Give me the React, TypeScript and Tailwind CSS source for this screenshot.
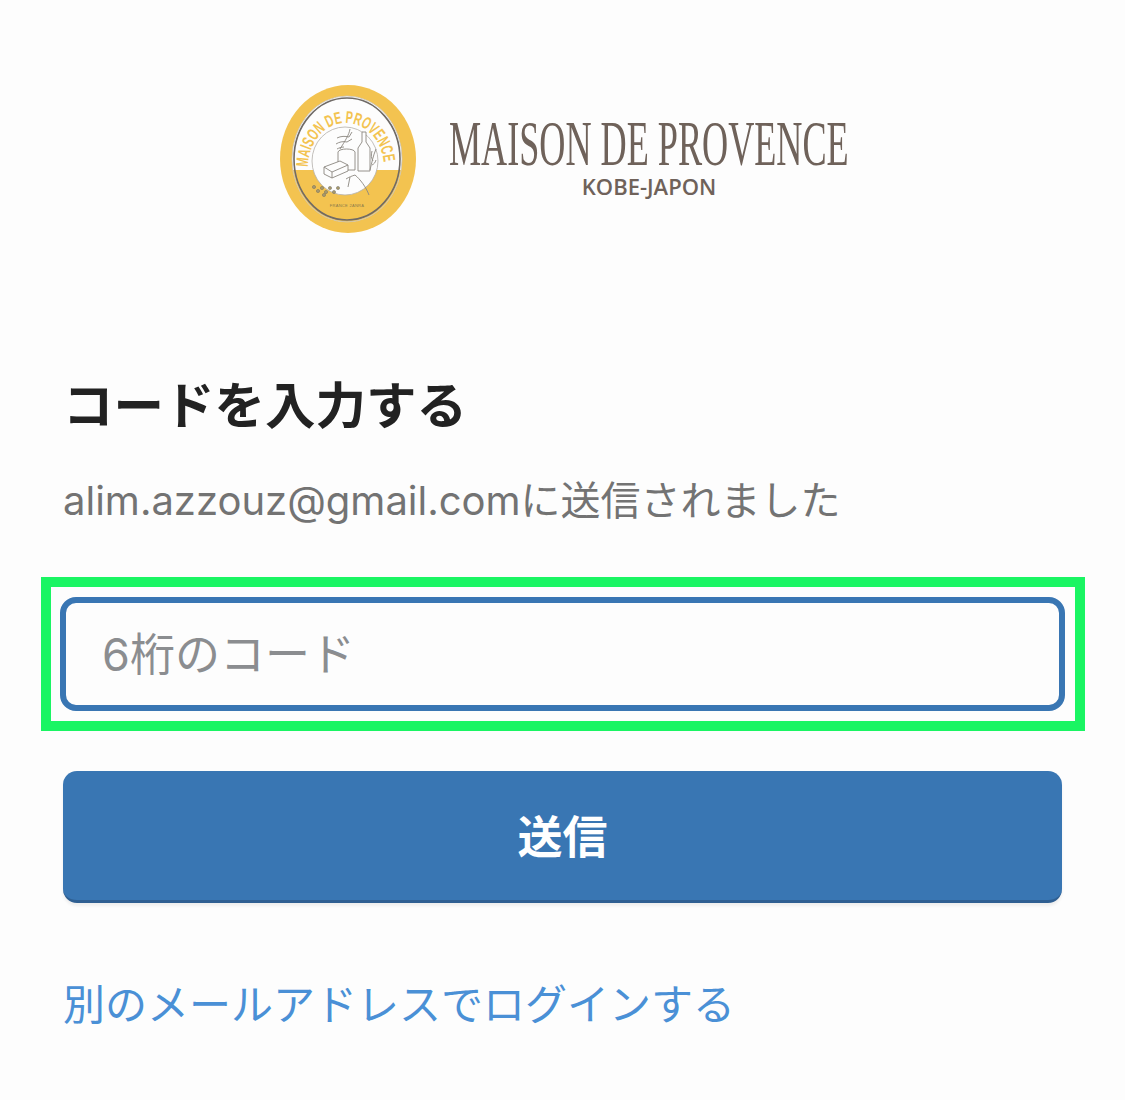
const JP = "font-['Inter','Noto_Sans_CJK_JP',sans-serif]";

const LogoMark = () => (
   <svg width="136" height="148" viewBox="0 0 136 148" className="shrink-0" aria-hidden="true">
      <defs>
         <clipPath id="lower">
            <rect x="0" y="85" width="136" height="63" />
         </clipPath>
         <path id="ring" d="M 28 82 A 38 44 0 0 1 104 82" />
      </defs>
      <ellipse cx="68" cy="74" rx="68" ry="74" fill="#f3c350" />
      <ellipse cx="67" cy="74" rx="55" ry="63" fill="#fdfdfd" />
      <ellipse cx="67" cy="74" rx="55" ry="63" fill="#f3c350" clipPath="url(#lower)" />
      <ellipse cx="67" cy="74" rx="53" ry="61" fill="none" stroke="#6f6a66" strokeWidth="1.6" />
      <ellipse cx="67" cy="74" rx="55" ry="63" fill="none" stroke="#c9c4ba" strokeWidth="0.8" />
      <ellipse cx="65" cy="76" rx="33" ry="34" fill="#fdfdfd" stroke="#b3afa9" strokeWidth="0.8" />
      <text fontFamily="'Liberation Sans', sans-serif" fontSize="17" fontWeight="700" fill="#f3c350">
         <textPath href="#ring" textLength="124" lengthAdjust="spacingAndGlyphs">MAISON DE PROVENCE</textPath>
      </text>
      {/* bottle, crock, loaf, sprigs */}
      <g fill="#fdfdfd" stroke="#8b8780" strokeWidth="0.9">
         <path d="M70 44c-1 6-5 12-10 20M69 52c-4-1-8-1-12 1M67 57c-4-1-8 0-11 2M64 62c-3 0-5 1-7 2M69 52l3-5M67 57l5-3" fill="none" />
         <path d="M58 67c1-4 16-4 17 0v18H58z" />
         <path d="M44 82l16-6 8 4v6l-16 7-8-4z" />
         <path d="M44 82l8 5 16-7M52 87v6" fill="none" />
         <path d="M82 47v10l-4 6v23h12V63l-4-6V47z" />
         <path d="M90 85c2-8 3-14 6-21M93 76c-2-3-2-6-1-10M92 80c2-1 3-2 4-5" fill="none" />
         <path d="M66 94c3-2 6-3 9-4 5 4 11 12 14 20M70 92l-2 10" fill="none" />
      </g>
      <g fill="#a89a6c" stroke="#6e6a60" strokeWidth="0.5">
         <circle cx="34" cy="102" r="1.6" />
         <circle cx="38" cy="106" r="1.6" />
         <circle cx="42" cy="103" r="1.6" />
         <circle cx="46" cy="107" r="1.6" />
         <circle cx="50" cy="103" r="1.6" />
         <circle cx="54" cy="107" r="1.6" />
         <circle cx="58" cy="103" r="1.6" />
         <circle cx="44" cy="110" r="1.6" />
      </g>
      <text x="67" y="122" textAnchor="middle" fontFamily="'Liberation Sans', sans-serif" fontSize="4" fill="#8a7a4c" letterSpacing="0.3">
         FRANCE 2ANRA
      </text>
   </svg>
);

export default function App() {
   return (
      <div className={`flex min-h-[1100px] flex-col bg-[#fdfdfd] ${JP}`}>
         {/* Logo */}
         <div className="flex items-center pl-[280px] pt-[85px]">
            <LogoMark />
            <div className="ml-[34px] mt-[-6px] flex w-[398px] flex-col items-center">
               <span className="origin-center scale-x-[0.565] whitespace-nowrap font-['Liberation_Serif',serif] text-[64px] leading-[60px] text-[#6f625a]">
                  MAISON DE PROVENCE
               </span>
               <span className="whitespace-nowrap font-['Open_Sans',sans-serif] text-[22px] font-semibold leading-[24px] text-[#6f625a]">
                  KOBE-JAPON
               </span>
            </div>
         </div>

         <div className="flex flex-col px-[63px] pt-[141px]">
            <h1 className="text-[50.5px] font-bold leading-[64px] text-[#222222]">コードを入力する</h1>
            <p className="mt-[39px] text-[40px] leading-[48px] text-[#737373]">alim.azzouz@gmail.comに送信されました</p>
         </div>

         {/* Focused field with highlight box */}
         <div className="mx-[41px] mt-[52px] w-[1044px] border-[10px] border-[#1af563] pb-[10px] pl-[9px] pr-[10px] pt-[10px]">
            <div className="flex h-[114px] items-center rounded-[16px] border-[6px] border-[#3976b3] bg-[#fdfdfd] pl-[36px]">
               <span className="text-[45px] leading-none text-[#8b8d90]">6桁のコード</span>
            </div>
         </div>

         <div className="px-[63px] pt-[40px]">
            <button className="flex h-[132px] w-[999px] items-center justify-center rounded-[14px] border-b-[3px] border-[#2f5f92] bg-[#3976b3] pt-[5px] text-[45px] font-bold text-white shadow-[0_3px_3px_rgba(0,0,0,0.06)]">
               送信
            </button>
            <a href="#" className="mt-[72px] block text-[42px] leading-[60px] text-[#4a90d6]">
               別のメールアドレスでログインする
            </a>
         </div>
      </div>
   );
}
